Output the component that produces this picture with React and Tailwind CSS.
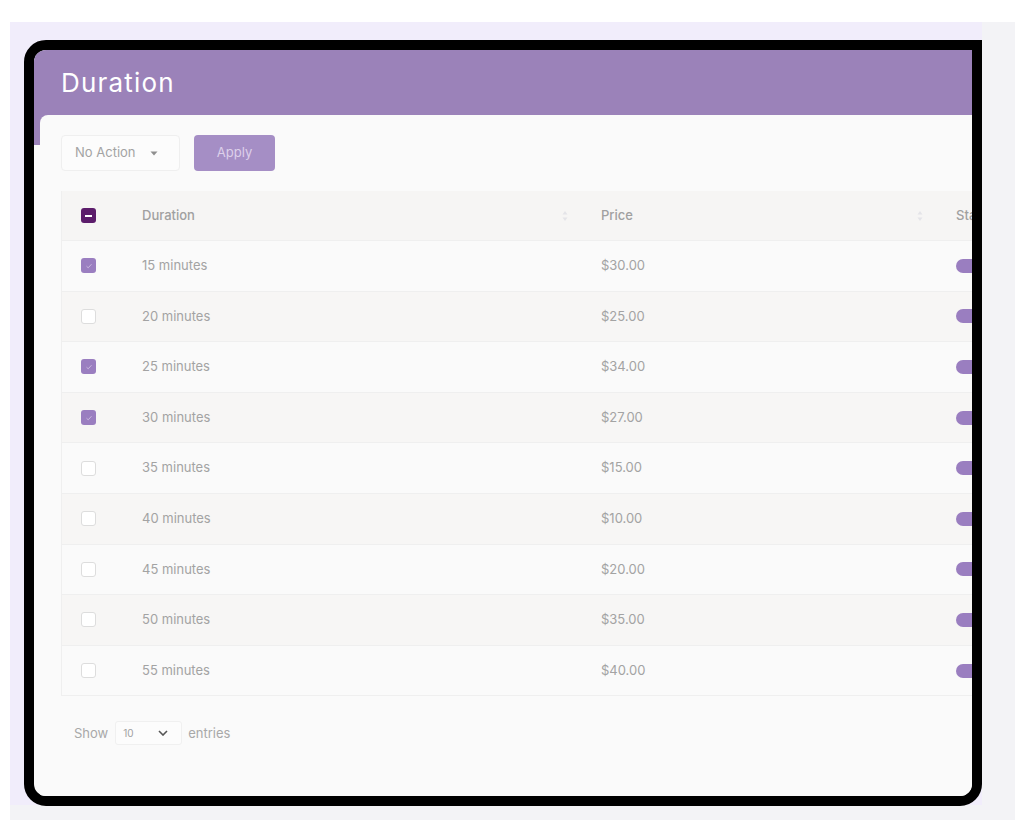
import { useState } from 'react';

const rows = [
  { id: 1, duration: '15 minutes', price: '$30.00', checked: true },
  { id: 2, duration: '20 minutes', price: '$25.00', checked: false },
  { id: 3, duration: '25 minutes', price: '$34.00', checked: true },
  { id: 4, duration: '30 minutes', price: '$27.00', checked: true },
  { id: 5, duration: '35 minutes', price: '$15.00', checked: false },
  { id: 6, duration: '40 minutes', price: '$10.00', checked: false },
  { id: 7, duration: '45 minutes', price: '$20.00', checked: false },
  { id: 8, duration: '50 minutes', price: '$35.00', checked: false },
  { id: 9, duration: '55 minutes', price: '$40.00', checked: false },
];

function SortIcon() {
  return (
    <svg width="6" height="12" viewBox="0 0 6 12" className="shrink-0">
      <path d="M3 1 L5.5 4.5 H0.5 Z" fill="#e4e4e8" />
      <path d="M3 11 L5.5 7.5 H0.5 Z" fill="#e4e4e8" />
    </svg>
  );
}

function Checkbox({ checked }) {
  if (checked) {
    return (
      <div className="w-[15px] h-[15px] rounded-[3px] bg-[#9a7ec0] flex items-center justify-center">
        <svg width="8" height="8" viewBox="0 0 8 8">
          <path d="M1.5 4.2 L3.2 5.8 L6.5 2.2" stroke="#c9b8de" strokeWidth="1" fill="none" />
        </svg>
      </div>
    );
  }
  return <div className="w-[15px] h-[15px] rounded-[3px] bg-white border border-[#dddddd]" />;
}

export default function App() {
  const [data] = useState(rows);

  return (
    <div className="w-[1024px] h-[830px] bg-white pt-[22px] pl-[10px] pr-[9px]" style={{ fontFamily: 'Inter, "Noto Sans", sans-serif' }}>
      <div className="h-[798px] bg-[#f3f3f6]">
        <div className="w-[972px] h-[783px] bg-[#f1edfb] pt-[18px] pl-[14px]">
          <div className="w-[958px] h-[766px] border-[10px] border-black rounded-[22px] rounded-tr-none bg-[#fafafa] overflow-hidden">
            {/* Header */}
            <div className="h-[95px] bg-[#9b82b9]">
              <div className="h-[64px] flex items-center pl-[27px]">
                <h1 className="text-[26px] text-white tracking-[1.2px] font-normal">Duration</h1>
              </div>
            </div>

            {/* Card */}
            <div className="-mt-[30px] ml-[6px] bg-[#fafafa] rounded-tl-[8px] pt-[20px] pl-[21px] h-[700px] overflow-hidden">
              {/* Toolbar */}
              <div className="flex items-center gap-[14px]">
                <div className="w-[119px] h-[36px] bg-[#fcfcfc] border border-[#efefef] rounded-[4px] flex items-center pl-[13px] text-[13px] text-[#a3a3a3]">
                  No Action
                  <svg width="8" height="5" viewBox="0 0 8 5" className="ml-[14px]">
                    <path d="M0.5 0.5 H7.5 L4 4.5 Z" fill="#8f8f8f" />
                  </svg>
                </div>
                <button className="w-[81px] h-[36px] bg-[#a58ec5] rounded-[4px] text-[13px] text-[#ddd0ea]">Apply</button>
              </div>

              {/* Table */}
              <div className="mt-[20px] w-[1000px] border-l border-b border-[#efefef]">
                <div className="h-[49px] bg-[#f6f5f4] flex items-center text-[13px] text-[#a0a0a0] font-medium">
                  <div className="w-[80px] pl-[19px] shrink-0">
                    <div className="w-[15px] h-[15px] rounded-[3px] bg-[#5c1d6b] flex items-center justify-center">
                      <div className="w-[7px] h-[2px] bg-white" />
                    </div>
                  </div>
                  <div className="w-[459px] shrink-0 flex items-center justify-between pr-[33px]">
                    <span>Duration</span>
                    <SortIcon />
                  </div>
                  <div className="w-[355px] shrink-0 flex items-center justify-between pr-[33px]">
                    <span>Price</span>
                    <SortIcon />
                  </div>
                  <div className="shrink-0">Status</div>
                </div>
                {data.map((r, i) => (
                  <div
                    key={r.id}
                    className={`h-[50.6px] flex items-center text-[13px] text-[#a3a3a3] border-t border-[#efefef] ${i % 2 === 1 ? 'bg-[#f7f6f5]' : 'bg-[#fafafa]'}`}
                  >
                    <div className="w-[80px] pl-[19px] shrink-0">
                      <Checkbox checked={r.checked} />
                    </div>
                    <div className="w-[459px] shrink-0">{r.duration}</div>
                    <div className="w-[355px] shrink-0">{r.price}</div>
                    <div className="shrink-0">
                      <div className="w-[34px] h-[14px] rounded-full bg-[#9a7ec0]" />
                    </div>
                  </div>
                ))}
              </div>

              {/* Footer */}
              <div className="mt-[25px] pl-[13px] flex items-center text-[13px] text-[#a8a8a8]">
                <span>Show</span>
                <div className="ml-[7px] w-[67px] h-[24px] bg-[#fcfcfc] border border-[#f0f0f0] rounded-[3px] flex items-center justify-between pl-[7px] pr-[13px]">
                  <span className="text-[10px] text-[#a0a0a0]">10</span>
                  <svg width="10" height="6" viewBox="0 0 10 6">
                    <path d="M1 1 L5 5 L9 1" stroke="#555" strokeWidth="1.6" fill="none" />
                  </svg>
                </div>
                <span className="ml-[6px]">entries</span>
              </div>
            </div>
          </div>
        </div>
      </div>
    </div>
  );
}
